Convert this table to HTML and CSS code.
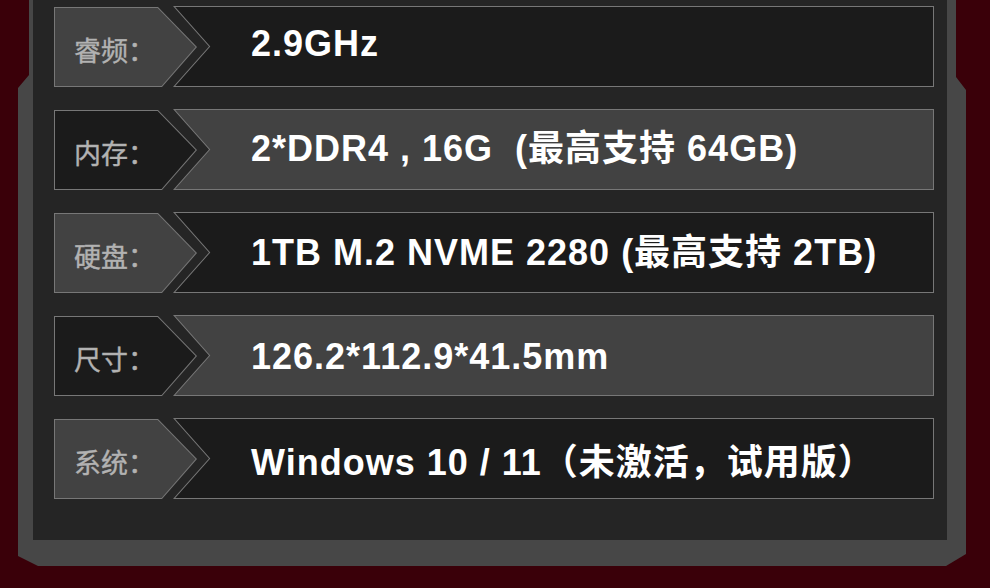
FILE: index.html
```html
<!DOCTYPE html>
<html lang="zh-CN">
<head>
    <meta charset="UTF-8">
    <meta name="viewport" content="width=device-width, initial-scale=1.0">
    <title>产品参数</title>
    <link rel="stylesheet" href="styles.css">
</head>
<body>
    <div class="frame">
        <div class="panel">
            <div class="specRow">
                <div class="tag light"><div class="tagInner">睿频：</div></div>
                <div class="value dark"><div class="valueInner">2.9GHz</div></div>
            </div>
            <div class="specRow">
                <div class="tag dark"><div class="tagInner">内存：</div></div>
                <div class="value light"><div class="valueInner">2*DDR4 , 16G&nbsp;&nbsp;(最高支持 64GB)</div></div>
            </div>
            <div class="specRow">
                <div class="tag light"><div class="tagInner">硬盘：</div></div>
                <div class="value dark"><div class="valueInner">1TB M.2 NVME 2280 (最高支持 2TB)</div></div>
            </div>
            <div class="specRow">
                <div class="tag dark"><div class="tagInner">尺寸：</div></div>
                <div class="value light"><div class="valueInner">126.2*112.9*41.5mm</div></div>
            </div>
            <div class="specRow">
                <div class="tag light"><div class="tagInner">系统：</div></div>
                <div class="value dark"><div class="valueInner">Windows 10 / 11（未激活，试用版）</div></div>
            </div>
        </div>
    </div>
</body>
</html>
```

FILE: styles.css
```css
* {
  box-sizing: border-box;
  margin: 0;
  padding: 0;
}

html, body {
  height: 100%;
  overflow: hidden;
}

body {
  background-color: #3a0009;
  font-family: "Liberation Sans", "Noto Sans CJK SC", sans-serif;
}

/* grey outer frame with cut corners */
.frame {
  width: 948px;
  height: 566px;
  margin-left: 18px;
  padding: 0 19px 26px 15px;
  background-color: #474747;
  clip-path: polygon(11px 0, calc(100% - 10px) 0, calc(100% - 10px) 77px, 100% 90px,
    100% 554px, calc(100% - 20px) 100%, 20px 100%, 0 556px, 0 88px, 11px 75px);
}

.panel {
  height: 100%;
  background-color: #252525;
  padding: 6px 13px 0 21px;
  display: flex;
  flex-direction: column;
  gap: 22px;
}

.specRow {
  display: grid;
  grid-template-columns: 119px 24px 1fr;
  height: 81px;
}

/* label arrow */
.tag {
  grid-column: 1 / 3;
  grid-row: 1;
  height: 80px;
  margin-top: 1px;
  padding: 1px;
  background-color: #777;
  clip-path: polygon(0 0, 104px 0, 143px 40px, 108px 80px, 0 80px);
}

.tagInner {
  height: 100%;
  padding: 5px 0 0 19px;
  display: flex;
  align-items: center;
  font-family: "Noto Sans CJK SC", sans-serif;
  font-size: 27px;
  letter-spacing: 0;
  line-height: 1;
  color: #b2b2b2;
  -webkit-text-stroke: 0.4px #b2b2b2;
  clip-path: polygon(0 0, 102.6px 0, 140.6px 39px, 106.6px 78px, 0 78px);
}

/* value box with notch */
.value {
  grid-column: 2 / 4;
  grid-row: 1;
  padding: 1px;
  background-color: #777;
  clip-path: polygon(0 0, 100% 0, 100% 100%, 0 100%, 36px 50%);
}

.valueInner {
  height: 100%;
  padding-left: 77px;
  display: flex;
  align-items: center;
  font-size: 36px;
  font-weight: bold;
  letter-spacing: 1px;
  line-height: 1;
  color: #fff;
  white-space: nowrap;
  clip-path: polygon(1.2px 0, 100% 0, 100% 100%, 1.2px 100%, 36.3px 50%);
}

.specRow:first-child .valueInner {
  padding-bottom: 5px;
}

.specRow:nth-child(2) .valueInner {
  padding-bottom: 2px;
}

.specRow:nth-child(4) .valueInner {
  padding-top: 3px;
}

.specRow:last-child .valueInner {
  padding-top: 9px;
}

.tag.light .tagInner,
.value.light .valueInner {
  background-color: #424242;
}

.tag.dark .tagInner,
.value.dark .valueInner {
  background-color: #1b1b1b;
}
```
